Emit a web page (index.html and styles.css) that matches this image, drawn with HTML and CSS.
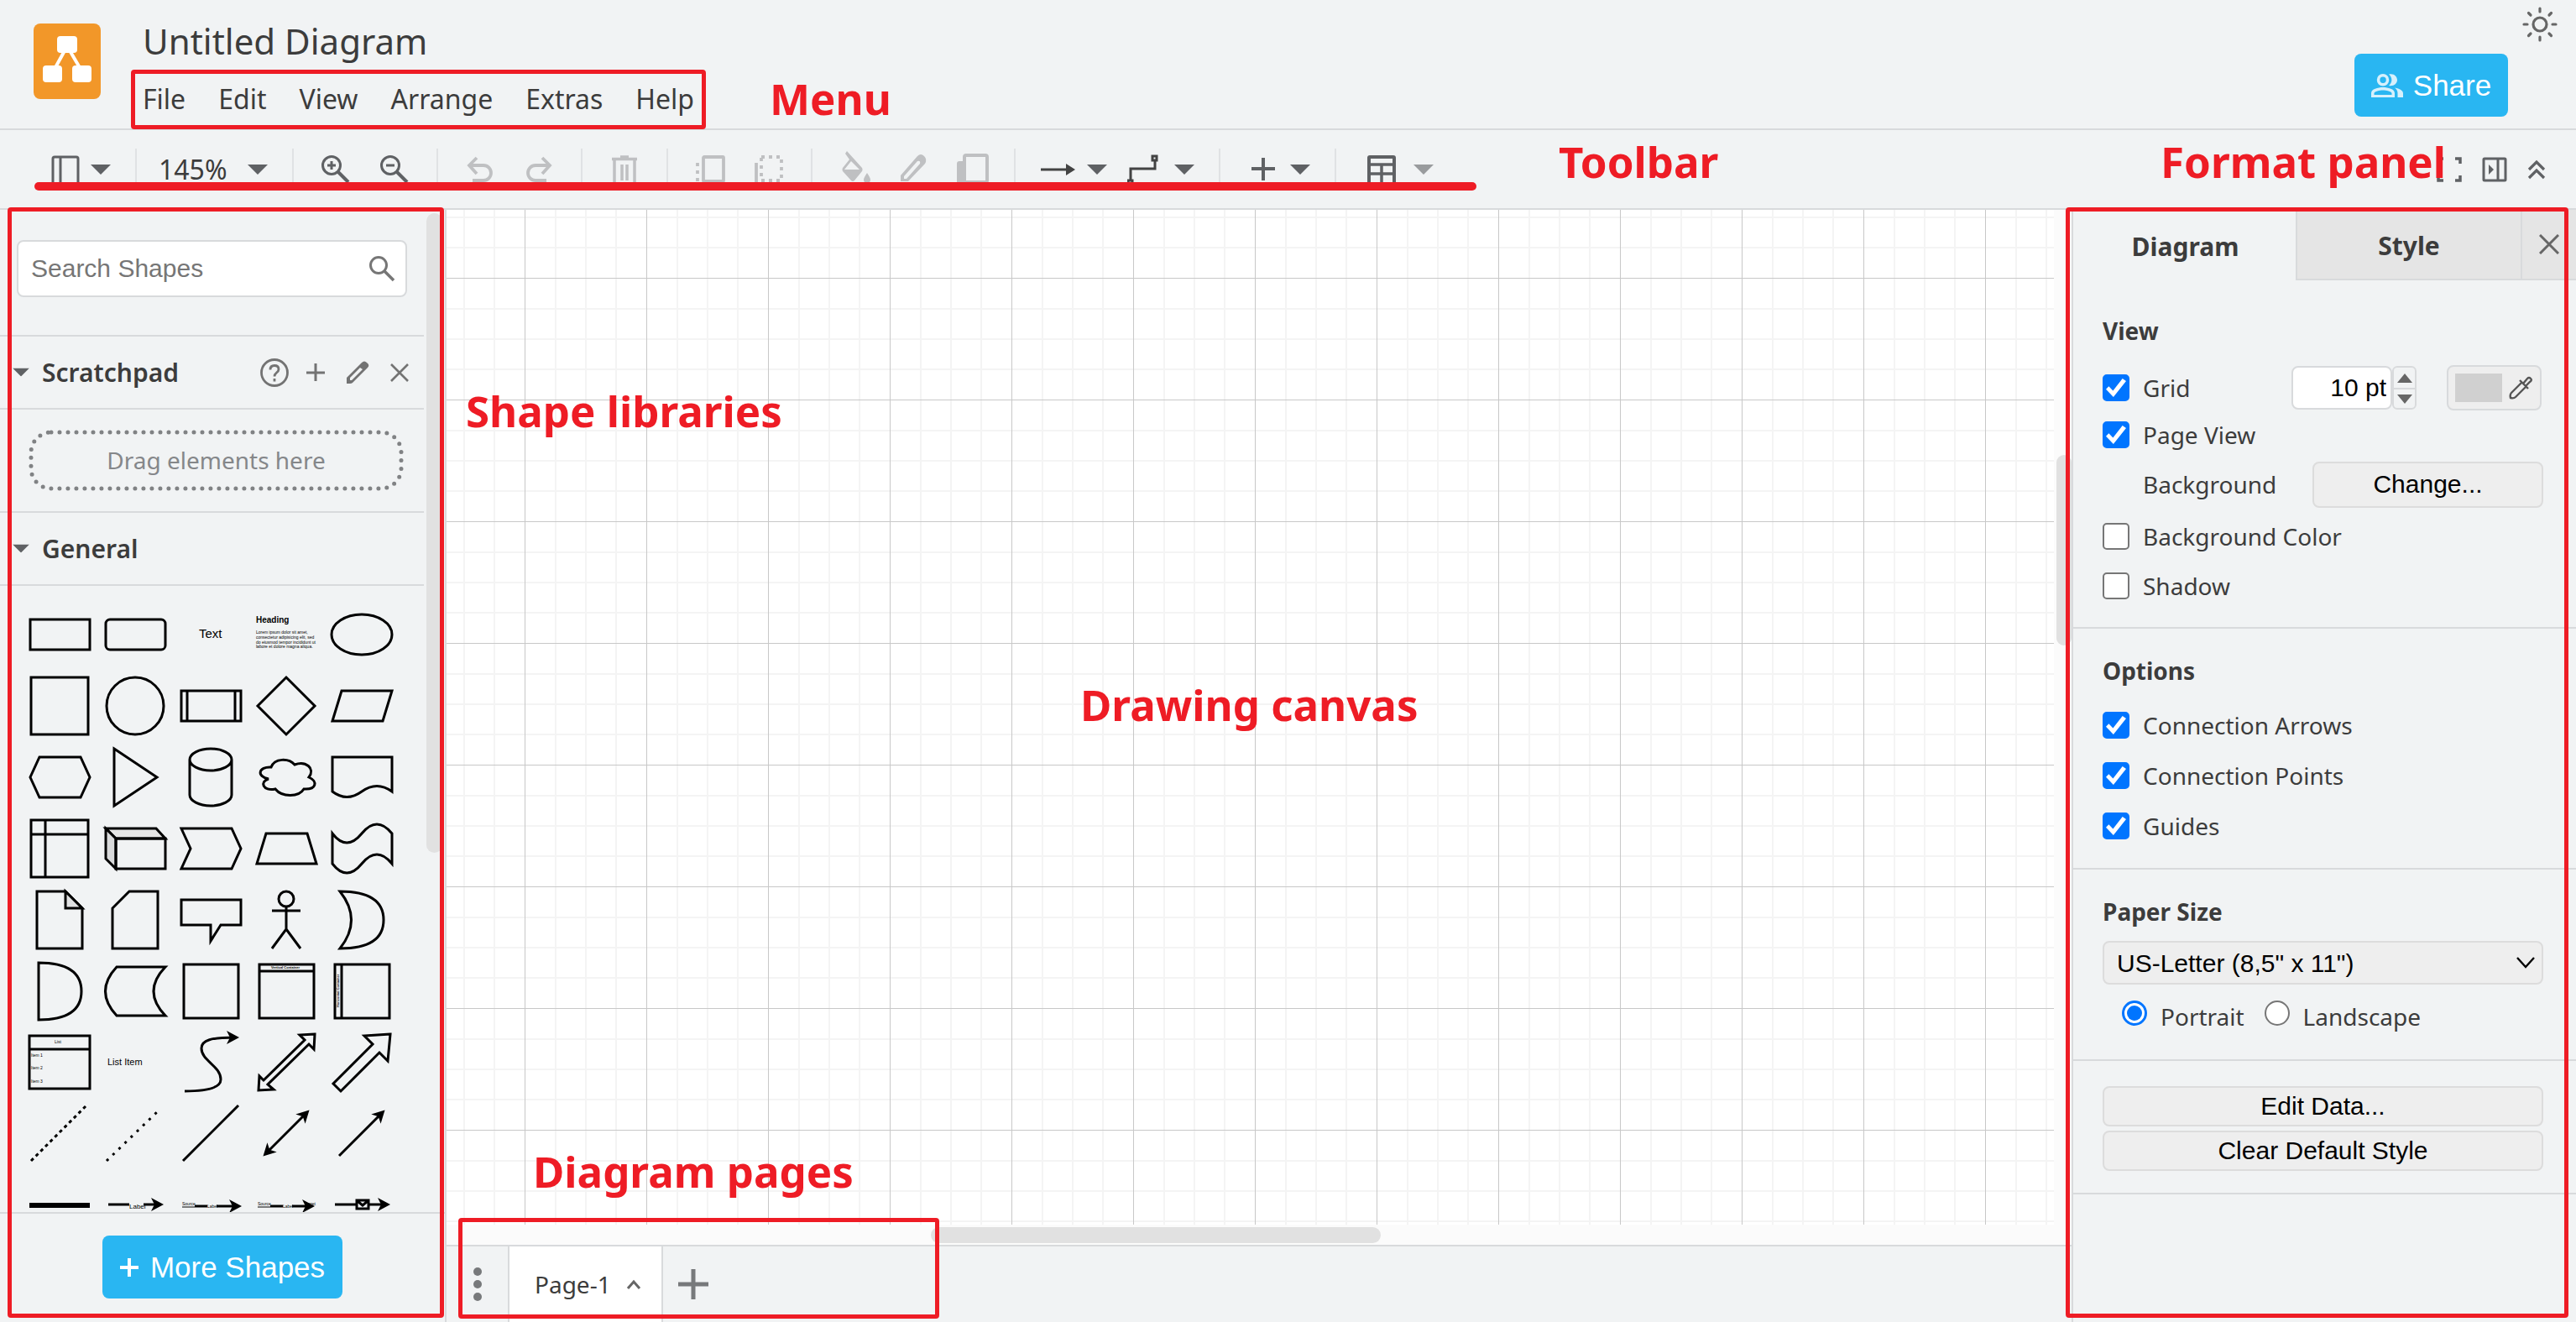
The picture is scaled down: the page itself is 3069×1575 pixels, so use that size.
FILE: index.html
```html
<!DOCTYPE html>
<html lang="en">
<head>
<meta charset="utf-8">
<title>Untitled Diagram</title>
<link rel="stylesheet" href="styles.css">
</head>
<body>
<svg class="defs" aria-hidden="true">
  <defs>
    <marker id="head" viewBox="0 0 16 16" markerWidth="16" markerHeight="16" refX="10" refY="8" orient="auto-start-reverse" markerUnits="userSpaceOnUse"><path d="M15 8L0 0L4 8L0 16z"/></marker>
    <symbol id="caret" viewBox="0 0 24 12"><path d="M0 0H24L12 12z"/></symbol>
    <symbol id="pencil" viewBox="0 0 36 36"><path d="M5 31V24L23 6Q26 3 29 6Q33 9 30 12L12 30Q11 31 9 31zM9 27H11L24 14L21 12L9 24z" fill="currentColor" fill-rule="evenodd"/></symbol>
  </defs>
</svg>

<header class="header">
  <svg class="logo" viewBox="0 0 80 90"><rect width="80" height="90" rx="8" fill="#f29729"/><path d="M40 27L24 56M40 27L57 56" stroke="#fff" stroke-width="4"/><g fill="#fff"><rect x="28" y="15" width="24" height="20" rx="4"/><rect x="11" y="50" width="23" height="20" rx="4"/><rect x="46" y="50" width="23" height="20" rx="4"/></g></svg>
  <div class="heading">
    <h1 class="title">Untitled Diagram</h1>
    <nav class="menu">
      <a href="#file">File</a><a href="#edit">Edit</a><a href="#view">View</a><a href="#arrange">Arrange</a><a href="#extras">Extras</a><a href="#help">Help</a>
      <span class="outline outline-menu"></span>
      <span class="note note-menu">Menu</span>
    </nav>
  </div>
  <div class="account">
    <button class="primary share" type="button">
      <svg width="38" height="28" viewBox="0 0 38 28" fill="#d6f0fc"><path fill-rule="evenodd" d="M14 0a7 7 0 1 1 0 14.500a7 7 0 0 1 0-14.500zM14 3.500a3.700 3.700 0 1 0 .1 7.400a3.700 3.700 0 0 0-.1-7.400zM0 28V23C0 18 8 16 14 16S28 18 28 23V28zM3.500 25H24.500V23C24 21 18 19.500 14 19.500S4 21 3.500 23z"/><path d="M21 .5C27 -1 31 3 31 7.200S27 15 21 14C25.500 10 25.500 4.500 21 .5zM28 16.500C34 17.500 38 20 38 23V28H31.500V23C31.500 20 30 18 28 16.500z"/></svg>
      Share</button>
    <button class="icon sun" type="button" aria-label="Appearance"><svg width="42" height="42" viewBox="0 0 42 42" fill="none" stroke="#666" stroke-width="3.200" stroke-linecap="round"><circle cx="21" cy="21" r="8"/><path d="M21 2V6M21 36V40M2 21H6M36 21H40M7.500 7.500L10 10M32 32L34.500 34.500M7.500 34.500L10 32M32 10L34.500 7.500"/></svg></button>
  </div>
</header>

<div class="toolbar">
  <div class="group">
    <button class="drop" type="button" aria-label="Panels"><svg width="36" height="36" viewBox="0 0 36 36" fill="none" stroke="currentColor" stroke-width="3"><rect x="3" y="3" width="30" height="32" rx="2"/><path d="M12 3V35"/></svg><svg class="caret"><use href="#caret"/></svg></button>
  </div>
  <div class="group scale">
    <button class="drop zoom" type="button">145%<svg class="caret"><use href="#caret"/></svg></button>
  </div>
  <div class="group icons">
    <button class="icon" type="button" aria-label="Zoom in"><svg width="36" height="36" viewBox="0 0 36 36" fill="none" stroke="currentColor" stroke-width="3"><circle cx="13" cy="13" r="10.500"/><path d="M21 21L33 33" stroke-width="4"/><path d="M8 13H18M13 8V18"/></svg></button>
    <button class="icon" type="button" aria-label="Zoom out"><svg width="36" height="36" viewBox="0 0 36 36" fill="none" stroke="currentColor" stroke-width="3"><circle cx="13" cy="13" r="10.500"/><path d="M21 21L33 33" stroke-width="4"/><path d="M8 13H18"/></svg></button>
  </div>
  <div class="group icons off">
    <button class="icon" type="button" aria-label="Undo"><svg width="36" height="36" viewBox="0 0 36 36" fill="none" stroke="currentColor" stroke-width="3.800"><path d="M14 4L5 13L14 23M5 13H22A9 9 0 0 1 22 31H9"/></svg></button>
    <button class="icon" type="button" aria-label="Redo"><svg width="36" height="36" viewBox="0 0 36 36" fill="none" stroke="currentColor" stroke-width="3.800"><path d="M22 4L31 13L22 23M31 13H14A9 9 0 0 0 14 31H27"/></svg></button>
  </div>
  <div class="group icons off">
    <button class="icon" type="button" aria-label="Delete"><svg width="36" height="36" viewBox="0 0 36 36" fill="none" stroke="currentColor" stroke-width="3.500"><path d="M3 5.500H33M13 3H23M6 6V35H30V6M15 12V31M21 12V31"/></svg></button>
  </div>
  <div class="group icons off">
    <button class="icon" type="button" aria-label="To front"><svg width="36" height="36" viewBox="0 0 36 36" fill="none" stroke="currentColor" stroke-width="3.800"><rect x="10" y="3" width="24" height="29" rx="1"/><path d="M3 10V36M3 37H28" stroke-dasharray="4 5"/></svg></button>
    <button class="icon" type="button" aria-label="To back"><svg width="36" height="36" viewBox="0 0 36 36" fill="none" stroke="currentColor" stroke-width="3.800"><rect x="9" y="3" width="24" height="28" stroke-dasharray="4 5"/><path d="M3 10V36H28"/></svg></button>
  </div>
  <div class="group icons off">
    <button class="icon" type="button" aria-label="Fill color"><svg width="36" height="48" viewBox="0 0 36 48" fill="currentColor"><path fill-rule="evenodd" d="M9 2L27 22Q28 24 27 26L18 37Q16 39 14 37L4 26Q3 24 4 22L12 12L7 5zM14 14L6 24H24z"/><path d="M33 28Q37 34 37 36A4 4 0 0 1 29 36Q29 34 33 28zM0 40H36V46H0z"/></svg></button>
    <button class="icon" type="button" aria-label="Line color"><svg width="36" height="48" viewBox="0 0 36 48" fill="currentColor"><path fill-rule="evenodd" d="M3 38V31L23 8Q27 4 31 8T32 17L12 38zM7 35H10L26 17Q27 13 23 14L7 32z"/><path d="M0 40H36V46H0z"/></svg></button>
    <button class="icon" type="button" aria-label="Shadow"><svg width="38" height="40" viewBox="0 0 38 40"><path d="M3 10H12V30H30V38H3Q0 38 0 35V13Q0 10 3 10z" fill="currentColor"/><rect x="9" y="3" width="27" height="32" rx="2" fill="#f1f3f4" stroke="currentColor" stroke-width="4"/></svg></button>
  </div>
  <div class="group lines">
    <button class="drop" type="button" aria-label="Connection"><svg width="44" height="36" viewBox="0 0 44 36"><path d="M1 18H32" stroke="#434343" stroke-width="3"/><path d="M31 11L42 18L31 25z" fill="#434343"/></svg><svg class="caret"><use href="#caret"/></svg></button>
    <button class="drop" type="button" aria-label="Waypoints"><svg width="44" height="36" viewBox="0 0 44 36" fill="none" stroke="#434343" stroke-width="3"><path d="M4 30V17H33V7"/><rect x="30" y="2" width="5" height="5"/><rect x="1" y="31" width="5" height="5"/></svg><svg class="caret"><use href="#caret"/></svg></button>
  </div>
  <div class="group">
    <button class="drop insert" type="button" aria-label="Insert"><svg width="44" height="36" viewBox="0 0 44 36" fill="none" stroke="currentColor" stroke-width="4"><path d="M22 4V31M8 17H36"/></svg><svg class="caret"><use href="#caret"/></svg></button>
  </div>
  <div class="group last">
    <button class="drop table" type="button" aria-label="Table"><svg width="44" height="36" viewBox="0 0 44 36" fill="none" stroke="currentColor" stroke-width="4"><rect x="7" y="3" width="30" height="32" rx="1"/><path d="M7 12H37M7 23H37M22 12V35" stroke-width="3.500"/></svg><svg class="caret"><use href="#caret"/></svg></button>
  </div>
  <div class="window-tools">
    <button class="icon" type="button" aria-label="Fullscreen"><svg width="30" height="30" viewBox="0 0 30 30" fill="none" stroke="currentColor" stroke-width="3.500"><path d="M2 8V2H8M22 2H28V8M28 22V28H22M8 28H2V22"/></svg></button>
    <button class="icon" type="button" aria-label="Format panel"><svg width="30" height="30" viewBox="0 0 30 30" fill="none" stroke="currentColor" stroke-width="3"><rect x="2" y="2" width="26" height="26" rx="1"/><path d="M19 2V28" stroke-width="3"/><path d="M8 9L14 15L8 21z" fill="currentColor" stroke="none"/></svg></button>
    <button class="icon" type="button" aria-label="Collapse"><svg width="22" height="24" viewBox="0 0 22 24" fill="none" stroke="currentColor" stroke-width="3.200"><path d="M2 12L11 3L20 12M2 22L11 13L20 22"/></svg></button>
  </div>
  <span class="underline"></span>
  <span class="note note-toolbar">Toolbar</span>
  <span class="note note-format">Format panel</span>
</div>

<div class="workspace">
  <aside class="sidebar">
    <div class="library">
      <div class="search">
        <input type="text" placeholder="Search Shapes" aria-label="Search Shapes">
        <svg width="32" height="32" viewBox="0 0 32 32" fill="none" stroke="#767676" stroke-width="3"><circle cx="12" cy="12" r="9.500"/><path d="M19 19L30 30" stroke-width="3.500"/></svg>
      </div>
      <div class="section-bar">
        <svg class="fold" viewBox="0 0 24 12"><use href="#caret"/></svg><h2>Scratchpad</h2>
        <div class="section-icons">
          <button class="icon" type="button" aria-label="Help"><svg width="36" height="36" viewBox="0 0 36 36" fill="none" stroke="currentColor" stroke-width="2.800"><circle cx="19" cy="18" r="15.500"/><path d="M14 14.500Q14 9.500 19 9.500T24 14Q24 16 21.500 18T19 22.500M19 25V28.500"/></svg></button>
          <button class="icon" type="button" aria-label="Add"><svg width="36" height="36" viewBox="0 0 36 36" stroke="currentColor" stroke-width="3"><path d="M18 7V28M7 18H29"/></svg></button>
          <button class="icon" type="button" aria-label="Edit"><svg width="36" height="36"><use href="#pencil"/></svg></button>
          <button class="icon" type="button" aria-label="Close"><svg width="36" height="36" viewBox="0 0 36 36" stroke="currentColor" stroke-width="2.600"><path d="M8 8L28 28M28 8L8 28"/></svg></button>
        </div>
      </div>
      <div class="scratch">
        <div class="dropzone"><svg aria-hidden="true"><rect class="dots" x="3" y="3" rx="24"/></svg>Drag elements here</div>
      </div>
      <div class="section-bar">
        <svg class="fold" viewBox="0 0 24 12"><use href="#caret"/></svg><h2>General</h2>
      </div>
      <div class="shapes">
        <svg viewBox="0 0 90 85"><rect x="10" y="24" width="71" height="36"/></svg>
        <svg viewBox="0 0 90 85"><rect x="10" y="24" width="71" height="36" rx="5"/></svg>
        <svg viewBox="0 0 90 85"><text class="t15" x="31" y="46">Text</text></svg>
        <svg viewBox="0 0 90 85"><text class="t10 b" x="9" y="28">Heading</text><text class="t5" x="9" y="41">Lorem ipsum dolor sit amet,</text><text class="t5" x="9" y="47">consectetur adipisicing elit, sed</text><text class="t5" x="9" y="53">do eiusmod tempor incididunt ut</text><text class="t5" x="9" y="58">labore et dolore magna aliqua.</text></svg>
        <svg viewBox="0 0 90 85"><ellipse cx="45" cy="42" rx="36" ry="24"/></svg>

        <svg viewBox="0 0 90 85"><rect x="11" y="8" width="68" height="68"/></svg>
        <svg viewBox="0 0 90 85"><circle cx="45" cy="42" r="34"/></svg>
        <svg viewBox="0 0 90 85"><path d="M10 24H81V60H10zM17 24V60M74 24V60"/></svg>
        <svg viewBox="0 0 90 85"><path d="M45 8L79 42L45 76L11 42z"/></svg>
        <svg viewBox="0 0 90 85"><path d="M21 24H81L70 60H10z"/></svg>

        <svg viewBox="0 0 90 85"><path d="M21 18H70L81 42L70 66H21L10 42z"/></svg>
        <svg viewBox="0 0 90 85"><path d="M20 8L71 42L20 76z"/></svg>
        <svg viewBox="0 0 90 85"><path d="M20 21a25 13 0 0 1 50 0v42a25 13 0 0 1-50 0zM20 21a25 13 0 0 0 50 0"/></svg>
        <svg viewBox="0 0 90 85"><path d="M27 30C31 19 48 19 55 27C68 22 80 31 72 42C83 47 81 57 66 56C60 66 40 66 32 56C17 59 13 47 24 44C9 41 12 29 27 30z"/></svg>
        <svg viewBox="0 0 90 85"><path d="M10 18H81V59Q63 46 45 59Q27 72 10 59z"/></svg>

        <svg viewBox="0 0 90 85"><path d="M11 8H79V76H11zM28 8V76M11 25H79"/></svg>
        <svg viewBox="0 0 90 85"><path fill="#e5e5e5" d="M10 18H70L81 30H22z"/><path fill="#d9dadb" d="M10 18L22 30V66L10 54z"/><path d="M22 30H81V66H22z"/></svg>
        <svg viewBox="0 0 90 85"><path d="M10 18H70L81 42L70 66H10L21 42z"/></svg>
        <svg viewBox="0 0 90 85"><path d="M21 24H70L81 60H10z"/></svg>
        <svg viewBox="0 0 90 85"><path d="M10 24Q27 46 45 24Q63 2 81 24V60Q63 38 45 60Q27 82 10 60z"/></svg>

        <svg viewBox="0 0 90 85"><path d="M18 8H52L72 28V76H18z"/><path fill="#e0e1e2" d="M52 8V28H72z"/></svg>
        <svg viewBox="0 0 90 85"><path d="M38 8H72V76H18V28z"/></svg>
        <svg viewBox="0 0 90 85"><path d="M10 18H81V48H57L45 67V48H10z"/></svg>
        <svg viewBox="0 0 90 85"><circle cx="45" cy="17" r="9"/><path d="M45 26V53L28 76M45 53L62 76M28 31H62"/></svg>
        <svg viewBox="0 0 90 85"><path d="M19 8Q71 8 71 42Q71 76 19 76Q46 42 19 8z"/></svg>

        <svg viewBox="0 0 90 85"><path d="M20 8Q71 8 71 42Q71 76 20 76z"/></svg>
        <svg viewBox="0 0 90 85"><path d="M23 13H81Q53 42 81 71H23Q-4 42 23 13z"/></svg>
        <svg viewBox="0 0 90 85"><rect x="13" y="10" width="65" height="64"/></svg>
        <svg viewBox="0 0 90 85"><path d="M13 10H78V74H13zM13 18H78"/><text class="t4 b" x="27" y="15">Vertical Container</text></svg>
        <svg viewBox="0 0 90 85"><path d="M13 10H78V74H13zM21 10V74"/><text class="t4 b" transform="translate(18 61) rotate(-90)">Horizontal Container</text></svg>

        <svg viewBox="0 0 90 85"><path d="M9 10H81V73H9zM9 26H81"/><text class="t5" x="39" y="19">List</text><text class="t5" x="11" y="35">Item 1</text><text class="t5" x="11" y="50">Item 2</text><text class="t5" x="11" y="66">Item 3</text></svg>
        <svg viewBox="0 0 90 85"><text class="t11" x="12" y="45">List Item</text></svg>
        <svg viewBox="0 0 90 85"><path marker-end="url(#head)" d="M14 76C40 76 57 72 57 62C57 46 34 40 34 25C34 15 46 12 74 12"/></svg>
        <svg viewBox="0 0 90 85"><path d="M79 8L61 9L67 15L18 63L13 58L12 75L30 74L23 68L72 20L78 26z"/></svg>
        <svg viewBox="0 0 90 85"><path d="M79 8L48 10L58 20L11 67L20 76L66 30L76 40z"/></svg>

        <svg viewBox="0 0 90 85"><path stroke-dasharray="4 4" d="M11 74L76 9"/></svg>
        <svg viewBox="0 0 90 85"><path stroke-dasharray="3 7" d="M11 74L74 13"/></svg>
        <svg viewBox="0 0 90 85"><path d="M12 74L78 8"/></svg>
        <svg viewBox="0 0 90 85"><path marker-start="url(#head)" marker-end="url(#head)" d="M21 65L69 17"/></svg>
        <svg viewBox="0 0 90 85"><path marker-end="url(#head)" d="M18 68L69 17"/></svg>

        <svg viewBox="0 0 90 85"><path stroke-width="6" d="M9 42H81"/></svg>
        <svg viewBox="0 0 90 85"><path marker-end="url(#head)" d="M13 41H38M55 41H74"/><text class="t8" x="38" y="46">Label</text></svg>
        <svg viewBox="0 0 90 85"><path marker-end="url(#head)" d="M26 43H41M52 43H77"/><path stroke-width="1" d="M11 44H26"/><text class="t5" x="11" y="42">Source</text><text class="t5" x="41" y="45">Label</text></svg>
        <svg viewBox="0 0 90 85"><path marker-end="url(#head)" d="M26 43H41M52 43H74"/><path stroke-width="1" d="M11 44H26"/><text class="t5" x="11" y="42">Source</text><text class="t5" x="41" y="45">Label</text><text class="t5" x="66" y="42">Target</text></svg>
        <svg viewBox="0 0 90 85"><path marker-end="url(#head)" d="M13 41H38M53 41H74"/><path d="M39 36H53V46H39zM40 37L46 42L52 37"/></svg>
      </div>
    </div>
    <div class="more"><button class="primary" type="button"><svg width="22" height="22" viewBox="0 0 22 22" stroke="#fff" stroke-width="4"><path d="M11 0V22M0 11H22"/></svg>More Shapes</button></div>
    <span class="thumb thumb-library"></span>
    <span class="outline outline-sidebar"></span>
  </aside>

  <main class="editor">
    <div class="canvas">
      <div class="grid"></div>
      <span class="thumb thumb-x"></span>
      <span class="thumb thumb-y"></span>
      <span class="note note-shapes">Shape libraries</span>
      <span class="note note-canvas">Drawing canvas</span>
      <span class="note note-pages">Diagram pages</span>
    </div>
    <div class="pages">
      <button class="icon page-menu" type="button" aria-label="Pages"><svg width="12" height="42" viewBox="0 0 12 42" fill="currentColor"><circle cx="6" cy="6" r="5"/><circle cx="6" cy="21" r="5"/><circle cx="6" cy="36" r="5"/></svg></button>
      <button class="page" type="button">Page-1<svg width="18" height="12" viewBox="0 0 18 12" fill="none" stroke="#666" stroke-width="3"><path d="M2 11L9 3L16 11"/></svg></button>
      <button class="icon add-page" type="button" aria-label="Insert page"><svg width="36" height="36" viewBox="0 0 36 36" stroke="currentColor" stroke-width="5"><path d="M18 0V36M0 18H36"/></svg></button>
      <span class="outline outline-pages"></span>
    </div>
  </main>

  <aside class="format">
    <div class="tabs">
      <button class="tab active" type="button">Diagram</button>
      <button class="tab" type="button">Style</button>
      <button class="close" type="button" aria-label="Close"><svg width="24" height="24" viewBox="0 0 24 24" stroke="#666" stroke-width="3"><path d="M1 1L23 23M23 1L1 23"/></svg></button>
    </div>
    <section class="panel view">
      <h3>View</h3>
      <div class="row r58">
        <label><input type="checkbox" checked>Grid</label>
        <div class="grid-size">
          <input type="text" value="10 pt" aria-label="Grid size">
          <span class="spinner"><button type="button" aria-label="Increase"><svg width="18" height="11" viewBox="0 0 18 11"><path d="M0 11H18L9 0z" fill="#666"/></svg></button><button type="button" aria-label="Decrease"><svg width="18" height="11" viewBox="0 0 18 11"><path d="M0 0H18L9 11z" fill="#666"/></svg></button></span>
          <button class="color" type="button" aria-label="Grid color"><span></span><svg width="28" height="28" viewBox="0 0 28 28" fill="none" stroke="#555" stroke-width="2.400"><path d="M15 8L3 20Q1 22 2 26Q6 27 8 25L20 13M13 5L23 15M17 9L22 3Q24 1 26 3T25 7L20 12"/></svg></button>
        </div>
      </div>
      <div class="row r54"><label><input type="checkbox" checked>Page View</label></div>
      <div class="row r64"><span class="indent">Background</span><button class="plain change" type="button">Change...</button></div>
      <div class="row"><label><input type="checkbox">Background Color</label></div>
      <div class="row r58"><label><input type="checkbox">Shadow</label></div>
    </section>
    <section class="panel">
      <h3>Options</h3>
      <div class="row"><label><input type="checkbox" checked>Connection Arrows</label></div>
      <div class="row"><label><input type="checkbox" checked>Connection Points</label></div>
      <div class="row"><label><input type="checkbox" checked>Guides</label></div>
    </section>
    <section class="panel">
      <h3 id="paper">Paper Size</h3>
      <div class="select"><select aria-labelledby="paper"><option>US-Letter (8,5" x 11")</option></select><svg width="22" height="14" viewBox="0 0 22 14" fill="none" stroke="#000" stroke-width="2.400"><path d="M1 1L11 12L21 1"/></svg></div>
      <div class="row orientation">
        <label><input type="radio" name="orientation" checked>Portrait</label>
        <label><input type="radio" name="orientation">Landscape</label>
      </div>
    </section>
    <section class="panel actions">
      <button class="plain" type="button">Edit Data...</button>
      <button class="plain" type="button">Clear Default Style</button>
    </section>
    <span class="outline outline-format"></span>
  </aside>
</div>
</body>
</html>
```
FILE: styles.css
```css
:root {
  --bg: #f1f3f4;
  --line: #d8dadc;
  --ink: #3c3c3c;
  --icon: #5f6164;
  --red: #ee1c25;
  --blue: #29b6f2;
}

* { box-sizing: border-box; }

body {
  margin: 0;
  height: 100vh;
  display: flex;
  flex-direction: column;
  overflow: hidden;
  background: var(--bg);
  color: var(--ink);
  font-family: "Noto Sans", "Open Sans", sans-serif;
  font-size: 28px;
}

h1, h2, h3 { margin: 0; }

svg { display: block; flex: none; }

button {
  margin: 0;
  padding: 0;
  border: 0;
  background: none;
  color: inherit;
  font: inherit;
}

.defs { position: absolute; width: 0; height: 0; }

.primary {
  display: flex;
  align-items: center;
  justify-content: center;
  height: 75px;
  border-radius: 8px;
  background: var(--blue);
  color: #fff;
  font: 35px "Liberation Sans", Arial, sans-serif;
}

/* Red call-outs */
.note {
  position: absolute;
  color: var(--red);
  font-size: 51px;
  font-weight: 700;
  line-height: 60px;
  white-space: nowrap;
}

.outline {
  position: absolute;
  z-index: 5;
  border: 5px solid var(--red);
  border-radius: 4px;
  pointer-events: none;
}

.outline-menu { inset: 0 -14px -1px -14px; }
.outline-sidebar { inset: -3px 1px 5px 9px; }
.outline-format { inset: -3px 9px 5px -9px; }
.outline-pages { left: 14px; top: -34px; bottom: 4px; width: 573px; }

.note-menu { left: calc(100% + 90px); top: 4px; }
.note-toolbar { left: 1857px; top: 7px; }
.note-format { right: 155px; top: 7px; }
.note-shapes { left: 23px; top: 209px; }
.note-canvas { left: 39%; top: 559px; }
.note-pages { left: 103px; bottom: 58px; }

/* Header */
.header {
  display: flex;
  height: 155px;
  padding: 0 22px 0 40px;
  border-bottom: 2px solid var(--line);
}

.logo { width: 80px; height: 90px; margin-top: 28px; }

.heading { margin: 20px 0 0 50px; }

.title { font-size: 42px; font-weight: 400; line-height: 58px; }

.menu {
  position: relative;
  display: flex;
  gap: 39px;
  width: max-content;
  margin-top: 5px;
  line-height: 70px;
  font-size: 32px;
}

.menu a { color: inherit; text-decoration: none; }

.account { display: flex; align-items: flex-start; gap: 17px; margin-left: auto; }
.share { width: 183px; gap: 12px; margin-top: 64px; }
.sun { margin-top: 8px; }

/* Toolbar */
.toolbar {
  position: relative;
  display: flex;
  align-items: center;
  height: 95px;
  padding-left: 31px;
  border-bottom: 2px solid var(--line);
  color: var(--icon);
}

.group {
  display: flex;
  align-items: center;
  height: 50px;
  padding: 0 29px;
  border-right: 2px solid #e0e2e4;
}

.scale { padding-left: 26px; }
.last { border-right: 0; padding-left: 32px; }

.icons { gap: 34px; padding: 0 32px; }
.icons .icon { width: 36px; height: 36px; display: flex; align-items: center; }
.icons svg { overflow: visible; }
.off { color: #bfc0c2; }
.lines { gap: 24px; }

.drop { display: flex; align-items: center; gap: 12px; }
.insert { gap: 10px; }
.table { gap: 16px; }
.table .caret { opacity: 0.6; }
.zoom { gap: 24px; color: var(--ink); font-size: 32px; line-height: 50px; }

.caret { width: 24px; height: 12px; fill: #5f6164; }

.underline {
  position: absolute;
  left: 41px;
  top: 62px;
  width: 1718px;
  height: 10px;
  border-radius: 5px;
  background: var(--red);
}

.window-tools {
  display: flex;
  align-items: center;
  gap: 24px;
  margin-left: auto;
  padding-right: 36px;
}

/* Workspace */
.workspace {
  flex: 1;
  min-height: 0;
  display: grid;
  grid-template-columns: 532px 1fr 601px;
}

.sidebar {
  position: relative;
  display: flex;
  flex-direction: column;
  min-height: 0;
  border-right: 2px solid var(--line);
}

.library { flex: 1; min-height: 0; margin-right: 25px; overflow: hidden; }

.thumb { position: absolute; border-radius: 10px; background: #e1e1e1; }
.thumb-library { right: 3px; top: 4px; width: 19px; height: 762px; }
.thumb-x { left: 577px; bottom: 2px; width: 536px; height: 19px; }
.thumb-y { right: 0; top: 292px; width: 18px; height: 227px; }

.search {
  position: relative;
  padding: 36px 20px 45px;
  border-bottom: 2px solid var(--line);
}

.search input {
  display: block;
  width: 465px;
  height: 68px;
  padding: 0 60px 0 15px;
  border: 2px solid var(--line);
  border-radius: 8px;
  background: #fff;
  font: 30px "Liberation Sans", Arial, sans-serif;
}

.search input::placeholder { color: #767676; }
.search svg { position: absolute; left: 439px; top: 54px; }

.section-bar {
  display: flex;
  align-items: center;
  height: 87px;
  padding: 0 11px 0 15px;
  border-bottom: 2px solid var(--line);
}

.section-bar h2 { margin-left: 15px; font-size: 30px; font-weight: 600; line-height: 40px; }
.fold { width: 20px; height: 11px; fill: #5f6164; }
.section-icons { display: flex; gap: 14px; margin-left: auto; color: #737373; }

.scratch { padding: 24px 24px 24px 34px; border-bottom: 2px solid var(--line); }

.dropzone {
  position: relative;
  color: #85878a;
  line-height: 73px;
  text-align: center;
}

.dropzone svg { position: absolute; inset: 0; width: 100%; height: 100%; }

.dots {
  width: calc(100% - 6px);
  height: calc(100% - 6px);
  fill: none;
  stroke: #808284;
  stroke-width: 5px;
  stroke-linecap: round;
  stroke-dasharray: 0 10;
}

.shapes {
  display: grid;
  grid-template-columns: repeat(5, 90px);
  grid-auto-rows: 85px;
  padding: 16px 0 0 26px;
}

.shapes svg { fill: none; stroke: #000; stroke-width: 3px; }
.shapes path[stroke-width="6"] { stroke-width: 6px; }
.shapes path[stroke-width="1"] { stroke-width: 1px; }
.shapes text { fill: #000; stroke: none; font-family: "Liberation Sans", Arial, sans-serif; }
.t4 { font-size: 4px; }
.t5 { font-size: 5px; }
.t8 { font-size: 8px; }
.t10 { font-size: 10px; }
.t11 { font-size: 11px; }
.t15 { font-size: 15px; }
.b { font-weight: 700; }

.more {
  display: flex;
  justify-content: center;
  align-items: flex-start;
  height: 131px;
  padding-top: 26px;
  border-top: 2px solid var(--line);
}

.more .primary { width: 286px; gap: 14px; }

.editor { display: flex; flex-direction: column; min-width: 0; min-height: 0; }

.canvas {
  position: relative;
  flex: 1;
  min-height: 0;
  padding: 0 21px 24px 0;
  background: #fbfbfb;
}

.grid {
  height: 100%;
  background-color: #fff;
  background-image:
    linear-gradient(90deg, #c8c8c8 1px, transparent 1px),
    linear-gradient(#c8c8c8 1px, transparent 1px),
    linear-gradient(90deg, transparent 36px, #f4f4f4 36px 38px, transparent 38px 72px, #f4f4f4 72px 74px, transparent 74px 108px, #f4f4f4 108px 110px, transparent 110px),
    linear-gradient(transparent 36px, #f4f4f4 36px 38px, transparent 38px 72px, #f4f4f4 72px 74px, transparent 74px 108px, #f4f4f4 108px 110px, transparent 110px);
  background-size: 145px 145px;
  background-position: 93px 81px;
}

.pages {
  position: relative;
  display: flex;
  height: 92px;
  border-top: 2px solid var(--line);
  color: #77797b;
}

.page-menu { width: 73px; padding-left: 31px; }

.page {
  display: flex;
  align-items: center;
  gap: 18px;
  width: 185px;
  padding-left: 30px;
  border: 2px solid var(--line);
  border-width: 0 2px;
  background: #fff;
  color: var(--ink);
  font-size: 28px;
}

.add-page { padding: 0 18px; }

/* Format panel */
.format { position: relative; border-left: 2px solid var(--line); min-height: 0; }

.tabs { display: grid; grid-template-columns: 265px 1fr 66px; height: 84px; }

.tab, .close {
  border: 2px solid var(--line);
  border-width: 0 0 2px 2px;
  background: #e5e5e5;
  font-size: 30px;
  font-weight: 700;
}

.tab { padding-top: 2px; }
.tab.active { padding-top: 4px; border-color: transparent; background: none; }
.close { padding-left: 20px; }

.panel { padding: 30px 39px 20px 35px; border-bottom: 2px solid var(--line); }
.view { padding-top: 40px; }
.actions { display: grid; gap: 5px; padding-bottom: 26px; }

.panel h3 { margin-bottom: 15px; font-size: 28px; line-height: 40px; }
.view h3 { margin-bottom: 19px; }

.row { display: flex; align-items: center; justify-content: space-between; height: 60px; }
.r54 { height: 54px; }
.r58 { height: 58px; }
.r64 { height: 64px; }

.row label { display: flex; align-items: center; gap: 16px; }
.indent { padding-left: 48px; }

.row input[type="checkbox"], .row input[type="radio"] {
  appearance: none;
  display: grid;
  place-items: center;
  width: 32px;
  height: 32px;
  margin: 0;
  border: 2px solid #767676;
  border-radius: 5px;
  background: #fff;
}

.row input[type="checkbox"]:checked { border-color: #0075ff; background: #0075ff; }

.row input[type="checkbox"]:checked::before {
  content: "";
  width: 24px;
  height: 22px;
  background: #fff;
  clip-path: polygon(0 58%, 14% 42%, 35% 66%, 82% 0, 100% 14%, 37% 100%);
}

.row input[type="radio"] { width: 30px; height: 30px; margin-bottom: 8px; border-radius: 50%; }
.row input[type="radio"]:checked { border: 3px solid #0075ff; }

.row input[type="radio"]:checked::before {
  content: "";
  width: 18px;
  height: 18px;
  border-radius: 50%;
  background: #0075ff;
}

.row.orientation { justify-content: flex-start; gap: 24px; height: 69px; padding: 6px 0 0 23px; }

.grid-size { display: flex; align-items: center; height: 54px; }

.grid-size input {
  width: 120px;
  height: 52px;
  padding: 0 5px;
  border: 2px solid var(--line);
  border-radius: 8px;
  background: #fff;
  color: #000;
  font: 30px "Liberation Sans", Arial, sans-serif;
  text-align: right;
}

.spinner {
  display: grid;
  grid-template-rows: 1fr 1fr;
  width: 29px;
  height: 52px;
  border: 2px solid var(--line);
  border-radius: 6px;
}

.spinner button { display: grid; place-items: center; }
.spinner button + button { border-top: 2px solid var(--line); }

.color {
  display: flex;
  align-items: center;
  gap: 8px;
  width: 113px;
  height: 54px;
  margin: 0 2px 0 36px;
  padding-left: 8px;
  border: 2px solid var(--line);
  border-radius: 8px;
  background: #eee;
}

.color span { width: 56px; height: 34px; background: #d0d0d0; }

.plain, .select select {
  height: 48px;
  border: 2px solid #dcdcdc;
  border-radius: 8px;
  background: #eee;
  color: #000;
  font: 30px "Liberation Sans", Arial, sans-serif;
}

.change { width: 275px; height: 55px; }

.select { position: relative; }
.select select { appearance: none; display: block; width: 100%; height: 52px; padding: 0 15px; }
.select svg { position: absolute; right: 10px; top: 19px; pointer-events: none; }
```
